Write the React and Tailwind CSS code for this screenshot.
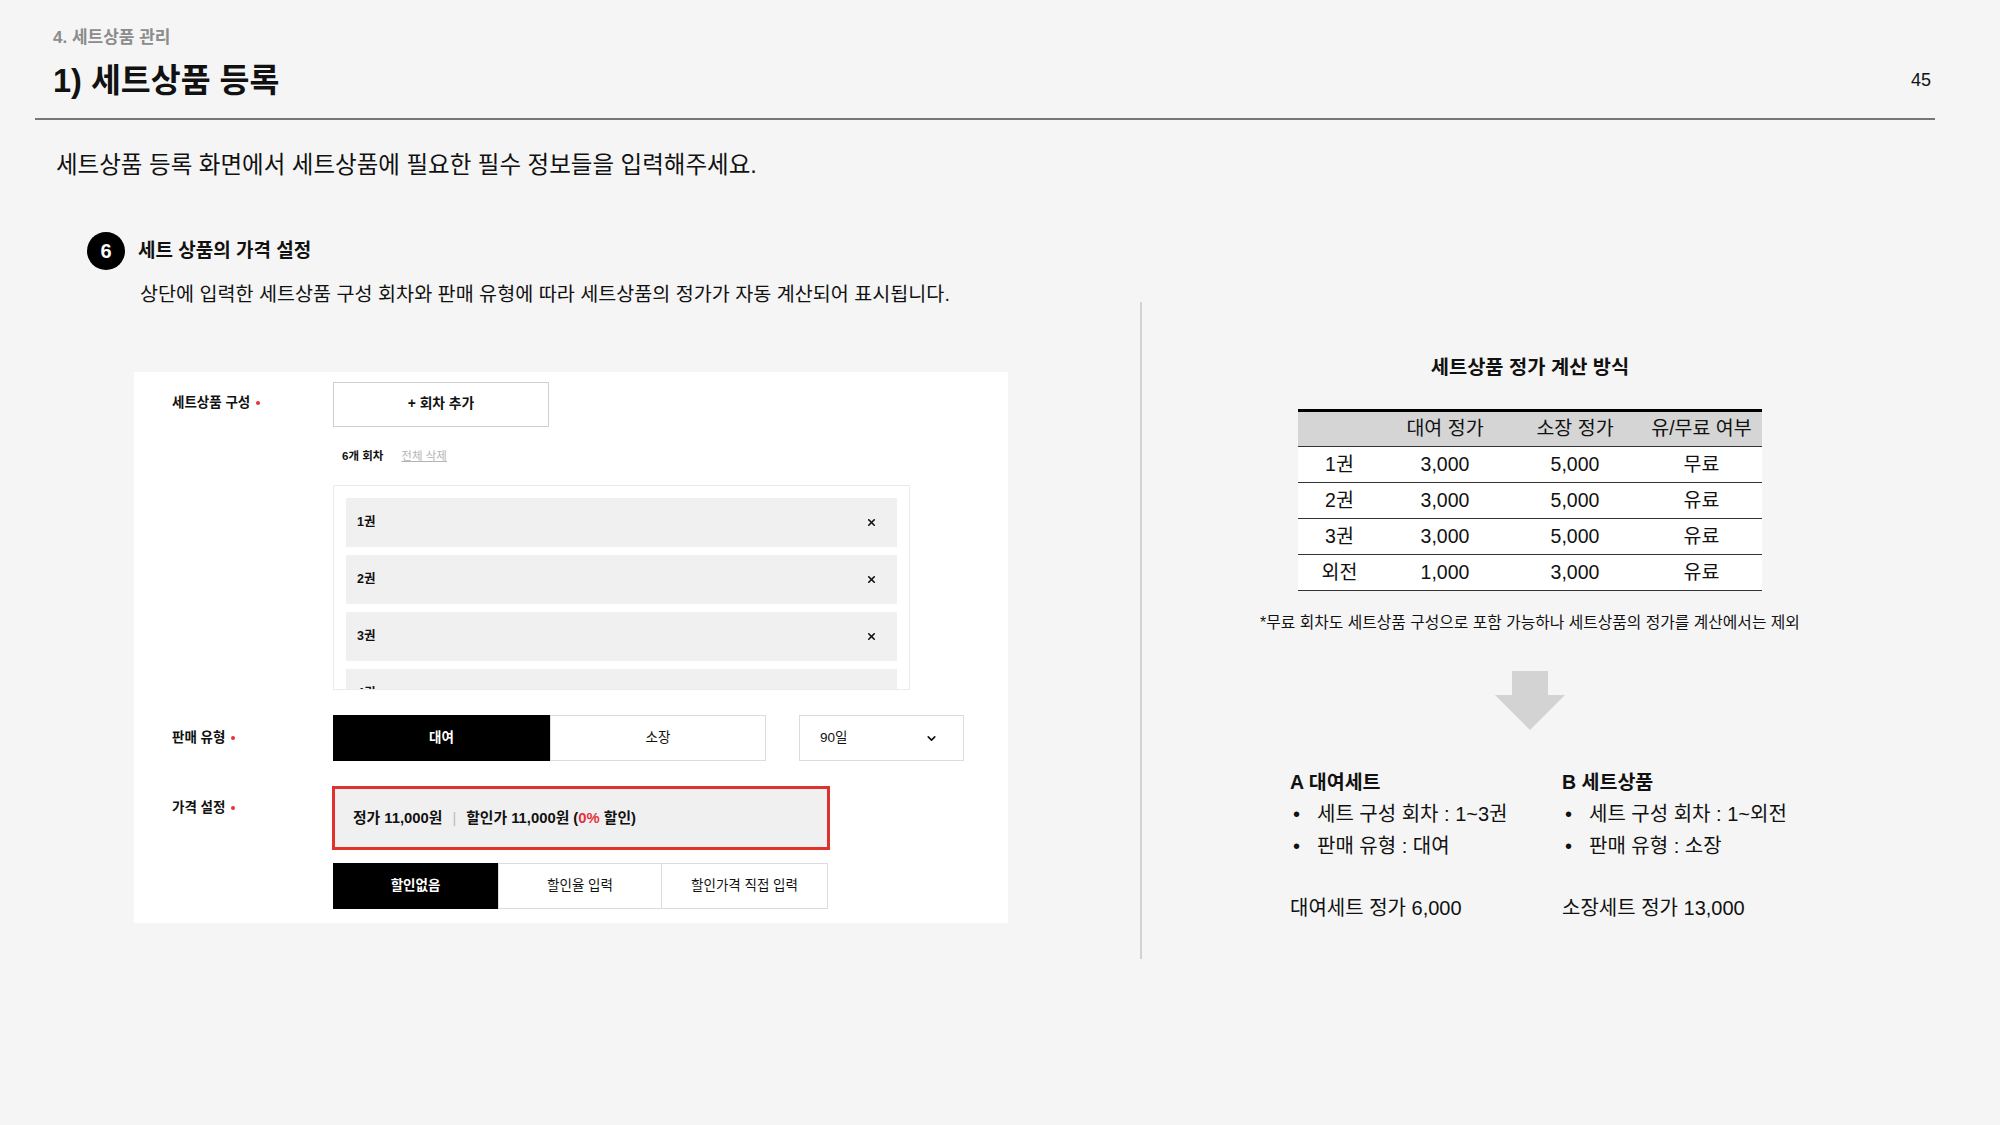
import React from 'react';
import { X, ChevronDown } from 'lucide-react';

const episodes = ['1권', '2권', '3권', '4권'];

const priceRows = [
  { name: '1권', rent: '3,000', own: '5,000', paid: '무료' },
  { name: '2권', rent: '3,000', own: '5,000', paid: '유료' },
  { name: '3권', rent: '3,000', own: '5,000', paid: '유료' },
  { name: '외전', rent: '1,000', own: '3,000', paid: '유료' },
];

function FieldLabel({ children, className = '' }) {
  return (
    <div className={`w-[161px] shrink-0 flex items-center text-[13.5px] leading-[18px] font-bold text-[#111] ${className}`}>
      {children}
      <span className="ml-[6px] w-[4px] h-[4px] rounded-full bg-[#e8303a]" />
    </div>
  );
}

function SetForm() {
  return (
    <div className="ml-[134px] mt-[65px] w-[874px] h-[551px] bg-white pt-[10px] pl-[38px]">
      {/* 세트상품 구성 */}
      <div className="flex">
        <FieldLabel className="pt-[12px] self-start">세트상품 구성</FieldLabel>
        <div className="flex flex-col">
          <div className="w-[216px] h-[45px] border border-[#cfcfcf] bg-white flex items-center justify-center text-[13.8px] font-bold">
            + 회차 추가
          </div>
          <div className="mt-[21px] pl-[9px] flex gap-[18px] text-[11.5px] leading-[16px]">
            <span className="font-bold">6개 회차</span>
            <span className="text-[#b4b4b4] underline">전체 삭제</span>
          </div>
          <div className="mt-[21px] w-[577px] h-[205px] border border-[#ebebeb] overflow-hidden pt-[12px] pl-[12px] pr-[12px] flex flex-col gap-[8px]">
            {episodes.map((ep) => (
              <div key={ep} className="h-[49px] shrink-0 bg-[#f0f0f0] flex items-center justify-between pl-[11px] pr-[20px] text-[12.5px] font-bold">
                <span>{ep}</span>
                <X size={11} strokeWidth={3.5} />
              </div>
            ))}
          </div>
        </div>
      </div>

      {/* 판매 유형 */}
      <div className="mt-[25px] flex">
        <FieldLabel className="pt-[14px] self-start">판매 유형</FieldLabel>
        <div className="flex">
          <div className="w-[217px] h-[46px] bg-black text-white flex items-center justify-center text-[13.5px] font-bold">대여</div>
          <div className="w-[216px] h-[46px] border border-[#dcdcdc] bg-white flex items-center justify-center text-[13.5px]">소장</div>
          <div className="ml-[33px] w-[165px] h-[46px] border border-[#dcdcdc] bg-white flex items-center justify-between pl-[20px] pr-[25px] text-[13.5px]">
            <span>90일</span>
            <ChevronDown size={13} strokeWidth={3} />
          </div>
        </div>
      </div>

      {/* 가격 설정 */}
      <div className="mt-[25px] flex">
        <FieldLabel className="pt-[13px] self-start">가격 설정</FieldLabel>
        <div className="flex flex-col">
          <div className="-ml-[1px] w-[498px] h-[64px] border-[3px] border-[#e0312d] bg-[#f0f0f0] flex items-center pl-[18px] text-[14.8px] font-bold">
            <span>정가 11,000원</span>
            <span className="mx-[10px] text-[#bbb] font-normal">|</span>
            <span>
              할인가 11,000원 (<span className="text-[#e8303a]">0%</span> 할인)
            </span>
          </div>
          <div className="mt-[13px] flex">
            <div className="w-[165px] h-[46px] bg-black text-white flex items-center justify-center text-[13.5px] font-bold">할인없음</div>
            <div className="w-[164px] h-[46px] border border-[#dcdcdc] bg-white flex items-center justify-center text-[13.5px]">할인율 입력</div>
            <div className="w-[166px] h-[46px] border border-l-0 border-[#dcdcdc] bg-white flex items-center justify-center text-[13.5px]">할인가격 직접 입력</div>
          </div>
        </div>
      </div>
    </div>
  );
}

function PriceTable() {
  return (
    <div className="mt-[28px] w-[464px] border-t-[3px] border-black text-[19.5px]">
      <div className="grid grid-cols-[83px_128px_132px_121px] h-[35px] bg-[#d5d5d5] border-b-[1.5px] border-[#333] items-center text-center">
        <span />
        <span>대여 정가</span>
        <span>소장 정가</span>
        <span>유/무료 여부</span>
      </div>
      {priceRows.map((r) => (
        <div key={r.name} className="grid grid-cols-[83px_128px_132px_121px] h-[36px] bg-white border-b-[1.5px] border-[#333] items-center text-center">
          <span>{r.name}</span>
          <span>{r.rent}</span>
          <span>{r.own}</span>
          <span>{r.paid}</span>
        </div>
      ))}
    </div>
  );
}

function SetSummary({ title, lines, total }) {
  return (
    <div className="flex flex-col">
      <div className="text-[19.5px] leading-[26px] font-bold">{title}</div>
      <div className="mt-[3px] text-[20px] leading-[32px]">
        {lines.map((l) => (
          <div key={l} className="flex">
            <span className="w-[27px] pl-[3px]">•</span>
            <span>{l}</span>
          </div>
        ))}
      </div>
      <div className="mt-[32px] text-[20px] leading-[28px]">{total}</div>
    </div>
  );
}

export default function App() {
  return (
    <div className="w-[2000px] h-[1125px] bg-[#f5f5f5] text-[#111] font-['Liberation_Sans','Noto_Sans_CJK_KR',sans-serif] overflow-hidden">
      {/* Header */}
      <div className="ml-[35px] w-[1900px] h-[120px] border-b-2 border-[#777] flex justify-between">
        <div className="pl-[18px] pt-[26px]">
          <div className="text-[17px] leading-[24px] font-semibold text-[#8c8c8c]">4. 세트상품 관리</div>
          <div className="mt-[11px] text-[32.5px] leading-[40px] font-bold">1) 세트상품 등록</div>
        </div>
        <div className="pr-[4px] pt-[68px] text-[18px] leading-[24px]">45</div>
      </div>

      <div className="mt-[29px] pl-[56px] text-[23.5px] leading-[32px]">
        세트상품 등록 화면에서 세트상품에 필요한 필수 정보들을 입력해주세요.
      </div>

      <div className="mt-[19px] flex">
        {/* Left */}
        <div className="w-[1140px] shrink-0 pt-[32px]">
          <div className="pl-[87px] flex items-center gap-[13px]">
            <div className="w-[38px] h-[38px] rounded-full bg-black text-white flex items-center justify-center text-[20px] font-bold">6</div>
            <div className="text-[19px] leading-[26px] font-bold">세트 상품의 가격 설정</div>
          </div>
          <div className="mt-[11px] pl-[140px] text-[19.6px] leading-[26px]">
            상단에 입력한 세트상품 구성 회차와 판매 유형에 따라 세트상품의 정가가 자동 계산되어 표시됩니다.
          </div>
          <SetForm />
        </div>

        {/* Divider */}
        <div className="mt-[102px] w-[2px] h-[657px] bg-[#d2d2d2] shrink-0" />

        {/* Right */}
        <div className="w-[776px] shrink-0 pt-[153px] flex flex-col items-center">
          <div className="text-[19.8px] leading-[28px] font-bold">세트상품 정가 계산 방식</div>
          <PriceTable />
          <div className="mt-[22px] text-[15.8px] leading-[20px]">
            *무료 회차도 세트상품 구성으로 포함 가능하나 세트상품의 정가를 계산에서는 제외
          </div>
          <svg className="mt-[38px]" width="70" height="59" viewBox="0 0 70 59">
            <polygon points="17,0 53,0 53,24 70,24 35,59 0,24 17,24" fill="#d3d3d3" />
          </svg>
          <div className="self-start ml-[148px] mt-[39px] grid grid-cols-[272px_272px]">
            <SetSummary
              title="A 대여세트"
              lines={['세트 구성 회차 : 1~3권', '판매 유형 : 대여']}
              total="대여세트 정가 6,000"
            />
            <SetSummary
              title="B 세트상품"
              lines={['세트 구성 회차 : 1~외전', '판매 유형 : 소장']}
              total="소장세트 정가 13,000"
            />
          </div>
        </div>
      </div>
    </div>
  );
}
